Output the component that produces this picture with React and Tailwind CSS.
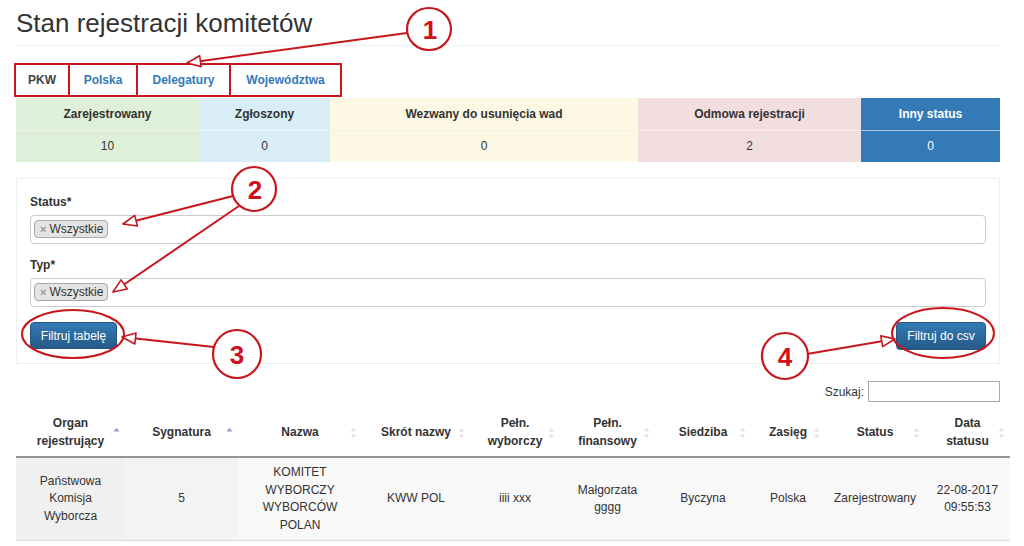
import React from "react";

function SortIcon({ active }) {
  return (
    <svg
      className="absolute right-[5px] top-1/2 -translate-y-1/2"
      width="7"
      height="12"
      viewBox="0 0 7 12"
    >
      {active ? (
        <path d="M0.5 4.5 L3.5 1 L6.5 4.5 Z" fill="#9393d6" />
      ) : (
        <>
          <path d="M0.5 4.5 L3.5 1 L6.5 4.5 Z" fill="#e2e2e2" />
          <path d="M0.5 7.5 L3.5 11 L6.5 7.5 Z" fill="#e2e2e2" />
        </>
      )}
    </svg>
  );
}

function Chip() {
  return (
    <div className="flex h-[18px] items-center rounded-[4px] border border-[#aaa] bg-[#e4e4e4] pl-[5px] pr-[4px] text-[12px] leading-[16px] text-[#333]">
      <span className="mr-[3px] text-[11px] font-bold text-[#999]">×</span>
      <span>Wszystkie</span>
    </div>
  );
}

const heads = [
  { label: <>Organ<br />rejestrujący</>, active: true },
  { label: "Sygnatura", active: true },
  { label: "Nazwa" },
  { label: "Skrót nazwy" },
  { label: <>Pełn.<br />wyborczy</> },
  { label: <>Pełn.<br />finansowy</> },
  { label: "Siedziba" },
  { label: "Zasięg" },
  { label: "Status" },
  { label: <>Data<br />statusu</> },
];

const widths = [109, 113, 124, 108, 90, 95, 96, 74, 100, 85];

const cells = [
  <>Państwowa<br />Komisja<br />Wyborcza</>,
  "5",
  <>KOMITET<br />WYBORCZY<br />WYBORCÓW<br />POLAN</>,
  "KWW POL",
  "iiii xxx",
  <>Małgorzata<br />gggg</>,
  "Byczyna",
  "Polska",
  "Zarejestrowany",
  <>22-08-2017<br />09:55:53</>,
];

const cellBg = [
  "bg-[#f0f0f0]",
  "bg-[#f3f3f3]",
  "bg-[#f8f8f8]",
  "bg-[#f8f8f8]",
  "bg-[#f8f8f8]",
  "bg-[#f8f8f8]",
  "bg-[#f8f8f8]",
  "bg-[#f8f8f8]",
  "bg-[#f8f8f8]",
  "bg-[#f8f8f8]",
];

export default function App() {
  return (
    <div className="relative h-[546px] w-[1024px] overflow-hidden bg-white font-['Liberation_Sans',Arial,sans-serif] text-[12px] text-[#333]">
      <div className="pl-[16px] pr-[24px]">
        <h1 className="pt-[8px] text-[26px] font-normal leading-[30px] text-[#333]">
          Stan rejestracji komitetów
        </h1>
        <div className="mt-[7px] h-px w-full bg-[#eeeeee]" />

        {/* tabs */}
        <div className="-ml-[2px] mt-[17px] flex h-[34px] text-[12px] font-bold">
          <div className="flex w-[56px] items-center justify-center border-2 border-[#c8161d] text-[#444]">
            PKW
          </div>
          <div className="flex w-[68px] items-center justify-center border-y-2 border-r-2 border-[#c8161d] text-[#337ab7]">
            Polska
          </div>
          <div className="flex w-[93px] items-center justify-center border-y-2 border-r-2 border-[#c8161d] text-[#337ab7]">
            Delegatury
          </div>
          <div className="flex w-[111px] items-center justify-center border-y-2 border-r-2 border-[#c8161d] text-[#337ab7]">
            Województwa
          </div>
        </div>

        {/* status summary */}
        <table className="mt-[1px] w-[984px] table-fixed text-center text-[12px]">
          <colgroup>
            <col className="w-[183px]" />
            <col className="w-[131px]" />
            <col className="w-[308px]" />
            <col className="w-[223px]" />
            <col className="w-[139px]" />
          </colgroup>
          <tbody>
            <tr className="h-[32px] font-bold">
              <td className="bg-[#dff0d8]">Zarejestrowany</td>
              <td className="bg-[#d9edf7]">Zgłoszony</td>
              <td className="bg-[#fcf8e3]">Wezwany do usunięcia wad</td>
              <td className="bg-[#f2dede]">Odmowa rejestracji</td>
              <td className="bg-[#337ab7] text-white">Inny status</td>
            </tr>
            <tr className="h-[32px]">
              <td className="border-t border-[#eef6ea] bg-[#dff0d8]">10</td>
              <td className="border-t border-[#edf6fb] bg-[#d9edf7]">0</td>
              <td className="border-t border-[#f2efe0] bg-[#fcf8e3]">0</td>
              <td className="border-t border-[#f8eded] bg-[#f2dede]">2</td>
              <td className="border-t border-[#a8c6e2] bg-[#337ab7] text-white">0</td>
            </tr>
          </tbody>
        </table>

        {/* filter panel */}
        <div className="mt-[16px] border border-[#f1f1f1] bg-white px-[13px] pb-[13px] pt-[15px]">
          <div className="text-[12px] font-bold leading-[17px]">Status*</div>
          <div className="mt-[4px] flex h-[29px] items-start rounded-[4px] border border-[#cccccc] pl-[3px] pt-[4px]">
            <Chip />
          </div>
          <div className="mt-[13px] text-[12px] font-bold leading-[17px]">Typ*</div>
          <div className="mt-[4px] flex h-[29px] items-start rounded-[4px] border border-[#cccccc] pl-[3px] pt-[4px]">
            <Chip />
          </div>
          <div className="mt-[15px] flex justify-between">
            <button className="h-[27px] w-[87px] rounded-[4px] border border-[#245580] bg-gradient-to-b from-[#337ab7] to-[#265a88] text-[12px] text-white">
              Filtruj tabelę
            </button>
            <button className="h-[28px] w-[90px] rounded-[4px] border border-[#245580] bg-gradient-to-b from-[#337ab7] to-[#265a88] text-[12px] text-white">
              Filtruj do csv
            </button>
          </div>
        </div>

        {/* search */}
        <div className="mt-[17px] flex items-center justify-end">
          <span className="mr-[4px] text-[12px]">Szukaj:</span>
          <div className="h-[21px] w-[132px] border border-[#a9a9a9] bg-white" />
        </div>

        {/* data table */}
        <table className="mt-[7px] w-[994px] max-w-none table-fixed text-center text-[12px] leading-[17.5px]">
          <colgroup>
            {widths.map((w, i) => (
              <col key={i} style={{ width: w }} />
            ))}
          </colgroup>
          <thead>
            <tr>
              {heads.map((h, i) => (
                <th
                  key={i}
                  className="relative border-b-2 border-[#949494] px-[4px] py-[6px] align-middle font-bold text-[#333]"
                >
                  <span className="whitespace-nowrap">{h.label}</span>
                  <SortIcon active={h.active} />
                </th>
              ))}
            </tr>
          </thead>
          <tbody>
            <tr>
              {cells.map((c, i) => (
                <td
                  key={i}
                  className={`${cellBg[i]} whitespace-nowrap border-b border-[#dddddd] px-[2px] py-[6px] align-middle`}
                >
                  {c}
                </td>
              ))}
            </tr>
          </tbody>
        </table>
      </div>

      {/* annotation overlay */}
      <svg
        className="pointer-events-none absolute left-0 top-0"
        width="1024"
        height="546"
        viewBox="0 0 1024 546"
      >
        <defs>
          <marker
            id="ah"
            markerWidth="18"
            markerHeight="14"
            refX="15"
            refY="7"
            orient="auto"
            markerUnits="userSpaceOnUse"
          >
            <path
              d="M1.5 1.5 L15 7 L1.5 12.5 Z"
              fill="white"
              stroke="#c8161d"
              strokeWidth="1.6"
              strokeLinejoin="round"
            />
          </marker>
        </defs>
        <g stroke="#c8161d" strokeWidth="2" fill="none">
          <line x1="407" y1="33" x2="187" y2="63" markerEnd="url(#ah)" />
          <line x1="233" y1="196" x2="123" y2="224" markerEnd="url(#ah)" />
          <line x1="239" y1="206" x2="113" y2="292" markerEnd="url(#ah)" />
          <line x1="214" y1="347" x2="122" y2="337" markerEnd="url(#ah)" />
          <line x1="807" y1="354" x2="895" y2="339" markerEnd="url(#ah)" />
          <ellipse cx="73" cy="334" rx="51" ry="24" />
          <ellipse cx="943" cy="333" rx="51" ry="25" />
        </g>
        <g stroke="#c8161d" strokeWidth="2.2" fill="white">
          <ellipse cx="429" cy="29" rx="22" ry="21" />
          <ellipse cx="254" cy="189" rx="22" ry="22" />
          <ellipse cx="237" cy="354" rx="24" ry="24" />
          <ellipse cx="785" cy="356" rx="23" ry="23" />
        </g>
        <g
          fill="#d0101c"
          fontFamily="Liberation Sans, Arial, sans-serif"
          fontWeight="bold"
          fontSize="26"
          textAnchor="middle"
        >
          <text x="430" y="39">1</text>
          <text x="255" y="199">2</text>
          <text x="237" y="364">3</text>
          <text x="785" y="366">4</text>
        </g>
      </svg>
    </div>
  );
}
